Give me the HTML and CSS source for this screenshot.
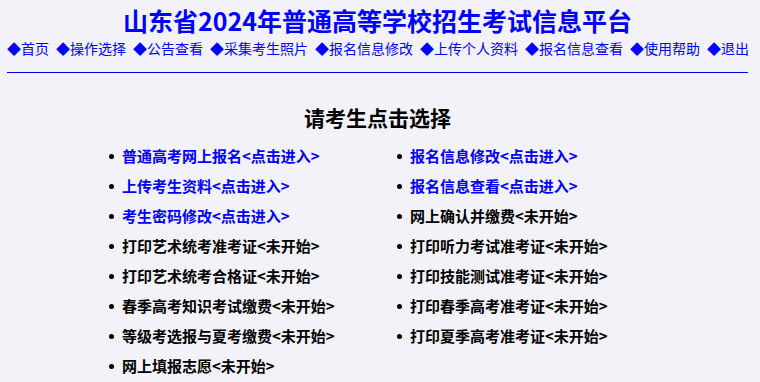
FILE: index.html
```html
<!DOCTYPE html>
<html lang="zh-CN">
<head>
<meta charset="utf-8">
<title>山东省2024年普通高等学校招生考试信息平台</title>
<link rel="stylesheet" href="styles.css">
</head>
<body>
<div class="page">
  <h1 class="title">山东省2024年普通高等学校招生考试信息平台</h1>
  <nav class="nav">
    <a href="#">◆首页</a>
    <a href="#">◆操作选择</a>
    <a href="#">◆公告查看</a>
    <a href="#">◆采集考生照片</a>
    <a href="#">◆报名信息修改</a>
    <a href="#">◆上传个人资料</a>
    <a href="#">◆报名信息查看</a>
    <a href="#">◆使用帮助</a>
    <a href="#">◆退出</a>
  </nav>
  <div class="rule"></div>
  <h2 class="heading">请考生点击选择</h2>
  <ul class="choices">
    <li><a href="#">普通高考网上报名&lt;点击进入&gt;</a></li>
    <li><a href="#">报名信息修改&lt;点击进入&gt;</a></li>
    <li><a href="#">上传考生资料&lt;点击进入&gt;</a></li>
    <li><a href="#">报名信息查看&lt;点击进入&gt;</a></li>
    <li><a href="#">考生密码修改&lt;点击进入&gt;</a></li>
    <li>网上确认并缴费&lt;未开始&gt;</li>
    <li>打印艺术统考准考证&lt;未开始&gt;</li>
    <li>打印听力考试准考证&lt;未开始&gt;</li>
    <li>打印艺术统考合格证&lt;未开始&gt;</li>
    <li>打印技能测试准考证&lt;未开始&gt;</li>
    <li>春季高考知识考试缴费&lt;未开始&gt;</li>
    <li>打印春季高考准考证&lt;未开始&gt;</li>
    <li>等级考选报与夏考缴费&lt;未开始&gt;</li>
    <li>打印夏季高考准考证&lt;未开始&gt;</li>
    <li>网上填报志愿&lt;未开始&gt;</li>
  </ul>
</div>
</body>
</html>
```
FILE: styles.css
```css
html, body {
  margin: 0;
  padding: 0;
  background: #f2f2f8;
}
body {
  font-family: "Noto Sans CJK SC", "Noto Sans", sans-serif;
  color: #000;
}
.page {
  padding: 0 12px 0 7px;
}
.title {
  margin: 0;
  padding-top: 2px;
  height: 36px;
  line-height: 36px;
  font-size: 25px;
  font-weight: bold;
  color: #0000ff;
  text-align: center;
}
.nav {
  display: flex;
  gap: 7px;
  height: 20px;
  line-height: 20px;
  font-size: 14px;
}
.nav a {
  color: #0000ff;
  text-decoration: none;
  white-space: nowrap;
}
.rule {
  margin-top: 14px;
  height: 1px;
  background: #0000e0;
}
.heading {
  margin: 29px 0 0;
  height: 30px;
  line-height: 30px;
  font-size: 21px;
  font-weight: bold;
  text-align: center;
}
.choices {
  list-style: none;
  margin: 9px 0 0;
  padding: 0 0 0 101px;
  display: grid;
  grid-template-columns: 288px 288px;
  grid-auto-rows: 30px;
}
.choices li {
  position: relative;
  padding-left: 14px;
  line-height: 30px;
  font-size: 15px;
  font-weight: bold;
  white-space: nowrap;
}
.choices li::before {
  content: "";
  position: absolute;
  left: 1px;
  top: 13px;
  width: 5px;
  height: 5px;
  border-radius: 50%;
  background: #000;
}
.choices a {
  color: #0000ff;
  text-decoration: none;
}
```
